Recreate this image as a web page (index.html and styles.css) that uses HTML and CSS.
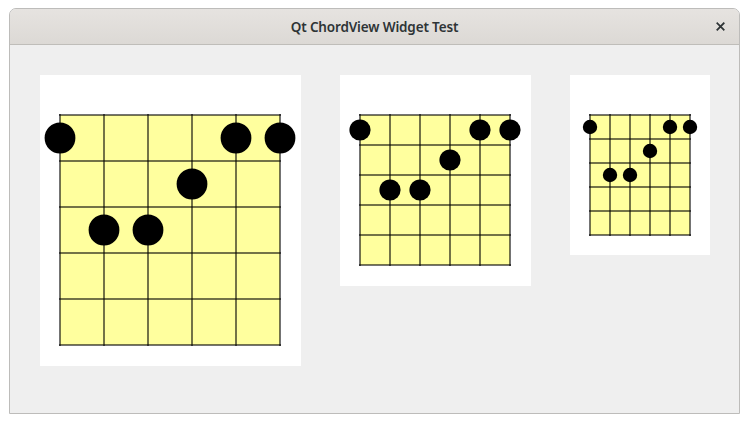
FILE: index.html
```html
<!DOCTYPE html>
<html>
<head>
<meta charset="utf-8">
<title>Qt ChordView Widget Test</title>
<link rel="stylesheet" href="styles.css">
</head>
<body>
<div class="window">
  <div class="titlebar">
    <span class="title">Qt ChordView Widget Test</span>
    <span class="close" aria-label="Close">
      <svg width="10" height="10" viewBox="0 0 10 10"><path d="M1.5 1.5 L8.5 8.5 M8.5 1.5 L1.5 8.5" stroke="#2e3436" stroke-width="2" stroke-linecap="square"/></svg>
    </span>
  </div>
  <div class="content">
    <div class="chord chord-large">
      <svg width="261" height="291" viewBox="0 0 261 291">
        <rect x="20" y="40" width="220" height="230" class="board"/>
        <g class="lines">
          <path d="M20 40V270M64 40V270M108 40V270M152 40V270M196 40V270M240 40V270"/>
          <path d="M20 40H240M20 86H240M20 132H240M20 178H240M20 224H240M20 270H240"/>
        </g>
        <g class="dots">
          <circle cx="20" cy="63" r="15.4"/>
          <circle cx="64" cy="155" r="15.4"/>
          <circle cx="108" cy="155" r="15.4"/>
          <circle cx="152" cy="109" r="15.4"/>
          <circle cx="196" cy="63" r="15.4"/>
          <circle cx="240" cy="63" r="15.4"/>
        </g>
      </svg>
    </div>
    <div class="chord chord-medium">
      <svg width="191" height="211" viewBox="0 0 191 211">
        <rect x="20" y="40" width="150" height="150" class="board"/>
        <g class="lines">
          <path d="M20 40V190M50 40V190M80 40V190M110 40V190M140 40V190M170 40V190"/>
          <path d="M20 40H170M20 70H170M20 100H170M20 130H170M20 160H170M20 190H170"/>
        </g>
        <g class="dots">
          <circle cx="20" cy="55" r="10.6"/>
          <circle cx="50" cy="115" r="10.6"/>
          <circle cx="80" cy="115" r="10.6"/>
          <circle cx="110" cy="85" r="10.6"/>
          <circle cx="140" cy="55" r="10.6"/>
          <circle cx="170" cy="55" r="10.6"/>
        </g>
      </svg>
    </div>
    <div class="chord chord-small">
      <svg width="140" height="180" viewBox="0 0 140 180">
        <rect x="20" y="40" width="100" height="120" class="board"/>
        <g class="lines">
          <path d="M20 40V160M40 40V160M60 40V160M80 40V160M100 40V160M120 40V160"/>
          <path d="M20 40H120M20 64H120M20 88H120M20 112H120M20 136H120M20 160H120"/>
        </g>
        <g class="dots">
          <circle cx="20" cy="52" r="7.2"/>
          <circle cx="40" cy="100" r="7.2"/>
          <circle cx="60" cy="100" r="7.2"/>
          <circle cx="80" cy="76" r="7.2"/>
          <circle cx="100" cy="52" r="7.2"/>
          <circle cx="120" cy="52" r="7.2"/>
        </g>
      </svg>
    </div>
  </div>
</div>
</body>
</html>
```
FILE: styles.css
```css
html, body {
  margin: 0;
  padding: 0;
  background: #ffffff;
}

body {
  padding: 8px 0 0 9px;
  font-family: "Noto Sans", "DejaVu Sans", sans-serif;
}

.window {
  width: 729px;
  height: 404px;
  border: 1px solid #bdbcba;
  border-radius: 7px 7px 0 0;
  background: #efefef;
  display: flex;
  flex-direction: column;
  overflow: hidden;
}

.titlebar {
  height: 35px;
  flex: none;
  background: linear-gradient(#e6e3e0, #dcd9d5);
  border-bottom: 1px solid #bfbdb9;
  display: flex;
  align-items: center;
  justify-content: center;
  position: relative;
}

.title {
  font-size: 13.5px;
  font-weight: 600;
  color: #2e3436;
  letter-spacing: -0.15px;
}

.close {
  position: absolute;
  right: 14px;
  top: 13px;
  width: 9px;
  height: 9px;
  display: block;
}

.close svg {
  display: block;
  width: 9px;
  height: 9px;
}

.content {
  flex: 1;
  display: flex;
  align-items: flex-start;
  gap: 39px;
  padding: 30px 0 0 30px;
}

.chord {
  background: #ffffff;
  flex: none;
}

.chord svg {
  display: block;
}

.board {
  fill: #ffff9e;
}

.lines path {
  fill: none;
  stroke: rgba(0, 0, 0, 0.55);
  stroke-width: 2;
  stroke-linecap: square;
}

.dots circle {
  fill: #000000;
}
```
